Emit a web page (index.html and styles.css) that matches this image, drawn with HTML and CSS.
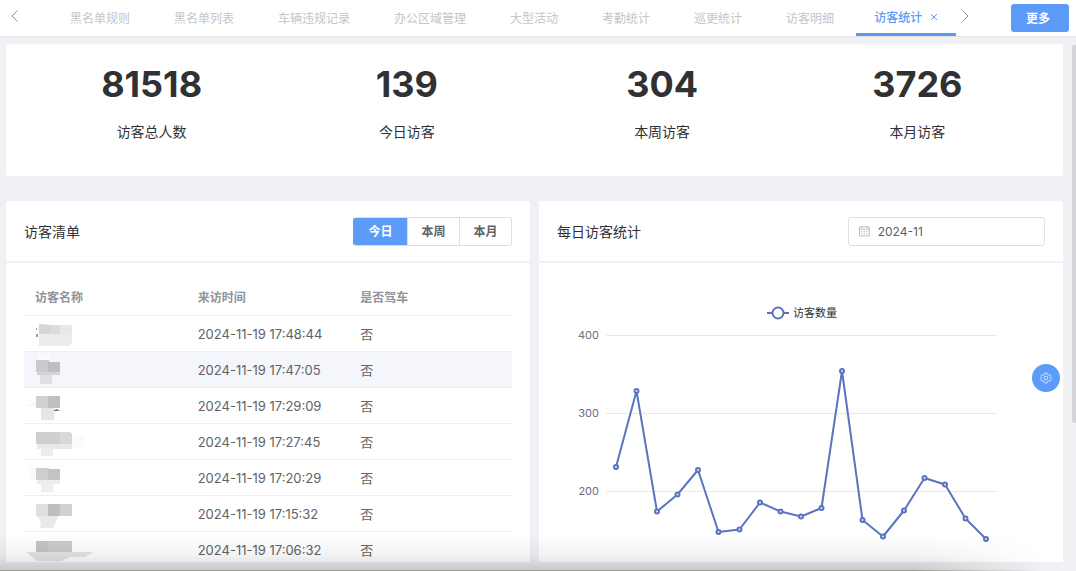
FILE: index.html
```html
<!DOCTYPE html>
<html lang="zh-CN">
<head>
<meta charset="utf-8">
<title>访客统计</title>
<link rel="stylesheet" href="styles.css">
</head>
<body>
<div class="app">
  <header class="topbar">
    <button class="arrow" aria-label="向左"><svg width="9" height="14" viewBox="0 0 9 14"><path d="M7.500 1.500L2 7l5.500 5.500"/></svg></button>
    <nav class="tabs">
      <button class="tab">黑名单规则</button>
      <button class="tab">黑名单列表</button>
      <button class="tab">车辆违规记录</button>
      <button class="tab">办公区域管理</button>
      <button class="tab">大型活动</button>
      <button class="tab">考勤统计</button>
      <button class="tab">巡更统计</button>
      <button class="tab">访客明细</button>
      <button class="tab tab-active">访客统计<svg class="close" width="8" height="8" viewBox="0 0 8 8"><path d="M1 1l6 6M7 1L1 7"/></svg></button>
    </nav>
    <button class="arrow" aria-label="向右"><svg width="9" height="14" viewBox="0 0 9 14"><path d="M1.500 1.500L7 7l-5.500 5.500"/></svg></button>
    <button class="more">更多</button>
  </header>

  <main class="content">
    <section class="card stats">
      <div class="stat"><strong>81518</strong><span>访客总人数</span></div>
      <div class="stat"><strong>139</strong><span>今日访客</span></div>
      <div class="stat"><strong>304</strong><span>本周访客</span></div>
      <div class="stat"><strong>3726</strong><span>本月访客</span></div>
    </section>

    <div class="panels">
      <section class="card panel">
        <div class="panel-head">
          <h2>访客清单</h2>
          <div class="segment">
            <button class="seg seg-on">今日</button>
            <button class="seg">本周</button>
            <button class="seg">本月</button>
          </div>
        </div>
        <div class="panel-body">
          <table class="visitors">
            <thead><tr><th>访客名称</th><th>来访时间</th><th>是否驾车</th></tr></thead>
            <tbody>
              <tr><td><svg class="mask" viewBox="0 0 72 32"><path fill="#999" d="M12 10h1v2h-1zm0 6h2v3h-2z"/><path fill="#d6d6d7" d="M15 6l12 1v9H15z"/><path fill="#dcdcdc" d="M27 7h9v9h-9z"/><path fill="#e8e8e8" d="M36 7h12v9H36z"/><path fill="#ececed" d="M15 16h33v9l-4 3H15z"/></svg></td><td>2024-11-19 17:48:44</td><td>否</td></tr>
              <tr class="hover"><td><svg class="mask" viewBox="0 0 72 32"><path fill="#fafafb" d="M14 0h12v6H14z"/><path fill="#c9cacd" d="M12 6h12v12H12z"/><path fill="#bdbec2" d="M24 6l2 2h10v10H24z"/><path fill="#d3d4d8" d="M13 18h23v3H13z"/><path fill="#dfe0e4" d="M16 21h12v9H16z"/></svg></td><td>2024-11-19 17:47:05</td><td>否</td></tr>
              <tr><td><svg class="mask" viewBox="0 0 72 32"><path fill="#f8f8f8" d="M2 16l10-5v5z"/><path fill="#d0d0d1" d="M12 6h12v12H12z"/><path fill="#bfbfc1" d="M24 6h12v12H24z"/><path fill="#e5e7e6" d="M17 18h13v12H17z"/><path fill="#777" d="M30 20l3-1 3 2h-6z"/></svg></td><td>2024-11-19 17:29:09</td><td>否</td></tr>
              <tr><td><svg class="mask" viewBox="0 0 72 32"><path fill="#cfcfd0" d="M12 6h24v12H12z"/><path fill="#d9d9d9" d="M36 6h10l2 2v10H36z"/><path fill="#e8e8e8" d="M13 18h35v5H13z"/><path fill="#ededed" d="M17 22h12v8H17z"/><path fill="#fbfbfb" d="M48 9h12v13H48z"/></svg></td><td>2024-11-19 17:27:45</td><td>否</td></tr>
              <tr><td><svg class="mask" viewBox="0 0 72 32"><path fill="#fafafa" d="M6 6h6v12H6z"/><path fill="#cececf" d="M12 6h12v12H12z"/><path fill="#c3c3c5" d="M24 6l2 1h10v11H24z"/><path fill="#ededed" d="M13 18h23v4H13z"/><path fill="#efefef" d="M17 22h12v8H17z"/></svg></td><td>2024-11-19 17:20:29</td><td>否</td></tr>
              <tr><td><svg class="mask" viewBox="0 0 72 32"><path fill="#e0e0e0" d="M12 6h12v12H12z"/><path fill="#bebec0" d="M24 6h12v12H24z"/><path fill="#d1d1d2" d="M36 6h12v12H36z"/><path fill="#e9e9e9" d="M13 18h22l-4 7-2 5H16l1-6z"/></svg></td><td>2024-11-19 17:15:32</td><td>否</td></tr>
              <tr><td><svg class="mask" viewBox="0 0 72 32"><path fill="#c4c4c6" d="M12 7h12v11H12z"/><path fill="#cbcbcc" d="M24 7h24v11H24z"/><path fill="#e4e4e4" d="M2 18h67l-8 5H46l-9 4H14l-6-4z"/></svg></td><td>2024-11-19 17:06:32</td><td>否</td></tr>
            </tbody>
          </table>
        </div>
      </section>

      <section class="card panel">
        <div class="panel-head">
          <h2>每日访客统计</h2>
          <label class="month">
            <svg width="12" height="12" viewBox="0 0 12 12"><path d="M.5 1.500h11v10H.5zM.5 4h11M3 0v2.500M9 0v2.500M2.500 6.500h1.500M5.200 6.500h1.500M8 6.500h1.500M2.500 9h1.500M5.200 9h1.500M8 9h1.500"/></svg>
            <input type="text" value="2024-11" aria-label="月份">
          </label>
        </div>
        <div class="panel-body">
          <svg class="chart" viewBox="0 0 488 300" role="img" aria-label="访客数量">
            <g class="grid"><path d="M49 54.500h391M49 132.500h391M49 210.500h391"/></g>
            <g class="axis"><text x="42" y="58">400</text><text x="42" y="136">300</text><text x="42" y="214">200</text></g>
            <g class="line">
              <path d="M210 32h22"/><circle class="key" cx="221" cy="32" r="5.500"/>
            </g>
            <text class="legend" x="236" y="36">访客数量</text>
            <g class="line">
              <path d="M59 186L79.500 110 100 230.500 120.500 213.500 141 189 161.500 251 182.500 248.500 203 221.500 223.500 230.500 244 235.500 264.500 227 285 90 305.500 239 326 255.500 347 229.500 367.500 197 388 203.500 408.500 237.500 429 258"/>
              <circle cx="59" cy="186" r="2"/><circle cx="79.500" cy="110" r="2"/><circle cx="100" cy="230.500" r="2"/><circle cx="120.500" cy="213.500" r="2"/><circle cx="141" cy="189" r="2"/><circle cx="161.500" cy="251" r="2"/><circle cx="182.500" cy="248.500" r="2"/><circle cx="203" cy="221.500" r="2"/><circle cx="223.500" cy="230.500" r="2"/><circle cx="244" cy="235.500" r="2"/><circle cx="264.500" cy="227" r="2"/><circle cx="285" cy="90" r="2"/><circle cx="305.500" cy="239" r="2"/><circle cx="326" cy="255.500" r="2"/><circle cx="347" cy="229.500" r="2"/><circle cx="367.500" cy="197" r="2"/><circle cx="388" cy="203.500" r="2"/><circle cx="408.500" cy="237.500" r="2"/><circle cx="429" cy="258" r="2"/>
            </g>
          </svg>
        </div>
      </section>
    </div>
  </main>

  <div class="scroll-thumb"></div>
  <button class="settings" aria-label="设置"><svg width="12" height="12" viewBox="0 0 14 14"><path d="M5.600 1.200h2.800l.5 1.700 1.200.7 1.700-.4 1.400 2.400L12 6.900v.2l1.200 1.300-1.400 2.400-1.700-.4-1.200.7-.5 1.700H5.600l-.5-1.700-1.200-.7-1.700.4L.8 8.400 2 7.100v-.2L.8 5.600l1.400-2.400 1.700.4 1.200-.7z"/><circle cx="7" cy="7" r="2.200"/></svg></button>
  <div class="shade"></div>
</div>
</body>
</html>
```
FILE: styles.css
```css
* { box-sizing: border-box; }
body {
  margin: 0;
  font-family: Inter, "Noto Sans CJK SC", sans-serif;
  font-size: 13px;
  color: #606266;
}
button, input { font: inherit; color: inherit; }
button { border: 0; padding: 0; background: none; cursor: pointer; }
svg { fill: none; }

.app {
  position: relative;
  display: flex;
  flex-direction: column;
  height: 100vh;
  overflow: hidden;
  background: #f0f1f5;
}

.topbar {
  display: flex;
  flex: none;
  align-items: center;
  height: 36px;
  padding: 0 7px 0 10px;
  background: #fff;
  box-shadow: 0 1px 1px #e4e6ea;
}
.arrow { display: flex; width: 9px; height: 14px; margin-bottom: 4px; }
.arrow path { stroke: #8d9095; stroke-width: 1; }
.tabs { display: flex; align-self: stretch; padding-left: 29px; margin-right: 5px; }
.tab {
  padding: 0 22px 1px;
  font-size: 12px;
  white-space: nowrap;
  color: #c3c5c9;
}
.tab-active {
  display: flex;
  align-items: center;
  gap: 8px;
  padding: 0 18px;
  border-bottom: 3px solid #5a9cf0;
  color: #5a9cf8;
  font-weight: 500;
}
.close path { stroke: #5a9cf8; stroke-width: 1; }
.more {
  width: 58px;
  height: 28px;
  padding-bottom: 2px;
  padding-right: 4px;
  margin-left: auto;
  border-radius: 3px;
  background: #5c9cf8;
  color: #fff;
  font-size: 12px;
  font-weight: 700;
}

.content {
  display: flex;
  flex: 1;
  flex-direction: column;
  gap: 25px;
  min-height: 0;
  padding: 8px 13px 9px 6px;
}
.card { border-radius: 3px; background: #fff; }
.stats {
  display: grid;
  flex: none;
  grid-template-columns: repeat(4, 1fr);
  padding: 18px 18px 34px;
}
.stat { display: flex; flex-direction: column; align-items: center; gap: 16px; color: #303133; }
.stat strong { font-size: 36px; line-height: 44px; }
.stat span { font-size: 14px; line-height: 20px; }

.panels {
  display: grid;
  flex: 1;
  grid-template-columns: 1fr 1fr;
  gap: 9px;
  min-height: 0;
}
.panel { display: flex; flex-direction: column; min-width: 0; min-height: 0; overflow: hidden; border-radius: 3px 3px 0 0; }
.panel-head {
  display: flex;
  flex: none;
  align-items: center;
  justify-content: space-between;
  height: 62px;
  padding: 0 18px;
  border-bottom: 2px solid #f0f1f4;
}
.panel-head h2 { margin: 0; font-size: 14px; font-weight: 400; color: #303133; }
.panel-body { padding: 18px 18px 0; }

.segment { display: flex; border: 1px solid #dcdfe6; border-radius: 3px; overflow: hidden; }
.seg { width: 52px; height: 27px; padding-bottom: 1px; border-left: 1px solid #dcdfe6; font-size: 12px; font-weight: 700; }
.seg-on { width: 53px; border-left: 0; background: #5c9cf8; color: #fff; }
.segment:has(.seg-on:first-child) { border-left-color: #5c9cf8; }

.month {
  display: flex;
  align-items: center;
  gap: 8px;
  width: 197px;
  height: 29px;
  padding: 0 10px;
  border: 1px solid #dcdfe6;
  border-radius: 3px;
}
.month path { stroke: #b4b7bd; stroke-width: 1; }
.month input { width: 100%; min-width: 0; padding: 0; border: 0; outline: 0; background: none; font-size: 12px; }

.visitors { width: 100%; table-layout: fixed; border-collapse: separate; border-spacing: 0; }
.visitors th, .visitors td { height: 36px; padding: 0 11px; border-bottom: 1px solid #ebeef5; text-align: left; line-height: 18px; }
.visitors th { height: 35px; color: #909399; font-size: 12px; font-weight: 700; }
.visitors td:first-child { padding: 0; }
.visitors tr.hover td { background: #f5f6fb; }
.mask { display: block; width: 72px; height: 32px; }

.chart { display: block; width: 100%; }
.grid path { stroke: #e6e9f2; stroke-width: 1; }
.axis text { fill: #6e7079; font-size: 11px; text-anchor: end; }
.legend { fill: #333; font-size: 11px; }
.line path { stroke: #5b74c0; stroke-width: 2; stroke-linejoin: round; }
.line circle { fill: #dfe6f6; stroke: #5b74c0; stroke-width: 2; }
.line .key { fill: #fff; }

.scroll-thumb {
  position: absolute;
  top: 45px;
  right: 0;
  width: 4px;
  height: 378px;
  border-radius: 3px 0 0 3px;
  background: #d3d4d8;
}
.settings {
  position: absolute;
  top: 364px;
  right: 16px;
  display: flex;
  align-items: center;
  justify-content: center;
  width: 28px;
  height: 28px;
  border-radius: 50%;
  background: #5c9cf8;
}
.settings path, .settings circle { stroke: #dbe9ff; stroke-width: 1; }
.shade {
  position: absolute;
  right: 0;
  bottom: 0;
  left: 0;
  height: 36px;
  border-bottom: 1px solid #9b9994;
  background: linear-gradient(rgba(0, 0, 0, 0), rgba(0, 0, 0, .05) 60%, rgba(0, 0, 0, .16));
  -webkit-mask-image: linear-gradient(to right, #000 85%, transparent 97%);
  mask-image: linear-gradient(to right, #000 85%, transparent 97%);
  pointer-events: none;
}
```
